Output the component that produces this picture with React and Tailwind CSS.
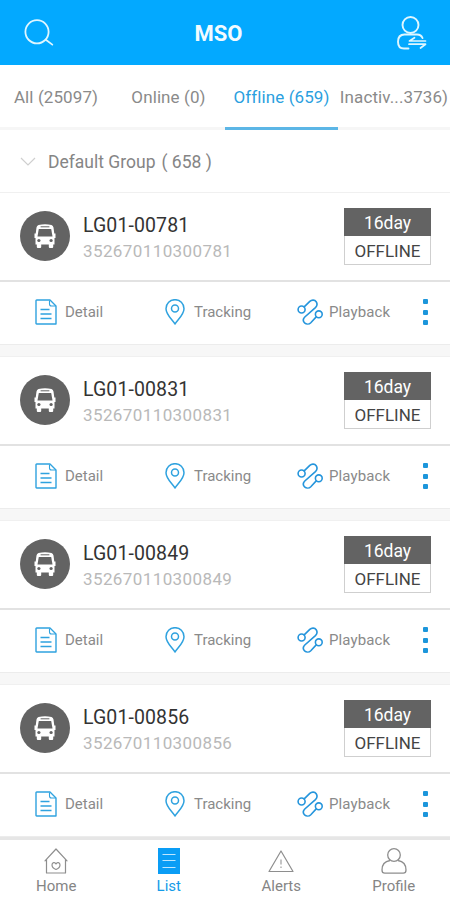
const tabs = [
  { label: 'All (25097)', box: 'w-[112px]' },
  { label: 'Online (0)', box: 'w-[113px]' },
  { label: 'Offline (659)', box: 'w-[113px]', active: true },
  { label: 'Inactiv...3736)', box: 'w-[112px]' },
];

const devices = [
  { name: 'LG01-00781', imei: '352670110300781' },
  { name: 'LG01-00831', imei: '352670110300831' },
  { name: 'LG01-00849', imei: '352670110300849' },
  { name: 'LG01-00856', imei: '352670110300856' },
];

function SearchIcon() {
  return (
    <svg className="w-[30px] h-[28px]" viewBox="0 0 30 28" fill="none" stroke="#dff6ff" strokeWidth="1.8" strokeLinecap="round">
      <circle cx="13" cy="12.800" r="11.600" />
      <path d="M21.800 20.800l6.500 4.800" />
    </svg>
  );
}

function SwitchUserIcon() {
  return (
    <svg className="w-[30px] h-[34px]" viewBox="0 0 30 34" fill="none" stroke="#dff6ff" strokeWidth="1.9" strokeLinecap="round" strokeLinejoin="round">
      <circle cx="13.500" cy="9" r="8" />
      <path d="M25.500 22C24.300 19 22 18.500 20 18.500H7.500c-4.300 0-6.500 3-6.500 7.200 0 4.100 2.200 6.800 6 6.800h4.500" />
      <path d="M28.500 25H12.500l5-3.300M12 28.200h16.500l-5 3.800" strokeWidth="1.7" />
    </svg>
  );
}

function BusIcon() {
  return (
    <svg className="w-[22px] h-[24px]" viewBox="0 0 22 24">
      <path d="M4.500 1Q11-.4 17.500 1q1.700.5 2 2.500l.8 6h1.200V14h-1v6.500h-1.300V23q0 1-1 1h-2.400q-1 0-1-1v-2.500H7.200V23q0 1-1 1H3.800q-1 0-1-1v-2.500H1.500V14h-1V9.500h1.200l.8-6q.3-2 2-2.500z" fill="#fff" />
      <path d="M7 2.800h8" stroke="#636363" strokeWidth="1" strokeLinecap="round" />
      <path d="M4.800 5h12.400l1.300 7.500h-15z" fill="#636363" />
      <circle cx="4.900" cy="16.500" r="1.600" fill="#636363" />
      <circle cx="17.100" cy="16.500" r="1.600" fill="#636363" />
    </svg>
  );
}

function DetailIcon() {
  return (
    <svg className="w-[22px] h-[26px]" viewBox="0 0 22 26" fill="none" stroke="#2fa2df" strokeWidth="1.4" strokeLinejoin="round">
      <path d="M1.700 1H15l6 6v18H1.700Q1 25 1 24.300V1.700Q1 1 1.700 1z" />
      <path d="M14.500 1.500v3.500q0 2 2 2H21" strokeWidth="1.100" />
      <path d="M5.500 10.500h9M5.500 15h11M5.500 19.500h11" />
    </svg>
  );
}

function TrackingIcon() {
  return (
    <svg className="w-[20px] h-[26px]" viewBox="0 0 20 26" fill="none" stroke="#2fa2df" strokeWidth="1.5" strokeLinejoin="round">
      <path d="M10 25C7 20.500 1 15.500 1 9.700a9 9 0 0 1 18 0C19 15.500 13 20.500 10 25z" />
      <circle cx="10" cy="9.500" r="3.500" />
    </svg>
  );
}

function PlaybackIcon() {
  return (
    <svg className="w-[26px] h-[26px]" viewBox="0 0 26 26" fill="none" stroke="#2595dc" strokeWidth="1.6" strokeLinecap="round">
      <circle cx="4.600" cy="10.500" r="3.500" />
      <circle cx="21.800" cy="15.300" r="3.400" />
      <path d="M7.200 7.900L12.800 2.400c2-1.900 5-1.600 6.400.3 1.300 1.900.8 4.200-.8 5.900L7.800 18c-1.800 1.900-1.800 4.300-.2 5.900 1.700 1.600 4.500 1.500 6.200-.2l5.400-5.800" />
    </svg>
  );
}

function HomeIcon() {
  return (
    <svg className="w-[24px] h-[26px]" viewBox="0 0 24 26" fill="none" stroke="#8e8e8e" strokeWidth="1.2" strokeLinejoin="round" strokeLinecap="round">
      <path d="M1 12.800L12 1l11 11.800M2.500 11.500V25h19V11.500" />
      <path d="M12 21.500c-2.300-1-4-2.600-4-4.600 0-2.600 3-3 4-1 1-2 4-1.600 4 1 0 2-1.700 3.600-4 4.600z" />
    </svg>
  );
}

function ListIcon() {
  return (
    <svg className="w-[22px] h-[26px]" viewBox="0 0 22 26">
      <path d="M0 0h22v26H0z" fill="#0a9df5" />
      <path d="M4.500 6.500h13M4.500 12.500h13M4.500 19.500h13" stroke="#bfe7ff" strokeWidth="1.200" />
    </svg>
  );
}

function AlertsIcon() {
  return (
    <svg className="w-[26px] h-[26px]" viewBox="0 0 26 26" fill="none" stroke="#8e8e8e" strokeWidth="1.2" strokeLinejoin="round">
      <path d="M13 3L25 23.500H1z" />
      <path d="M13 11.500v5M13 18.500v1.500" stroke="#a5a5a5" strokeWidth="1.300" />
    </svg>
  );
}

function ProfileIcon() {
  return (
    <svg className="w-[26px] h-[26px]" viewBox="0 0 26 26" fill="none" stroke="#8e8e8e" strokeWidth="1.3" strokeLinejoin="round">
      <circle cx="13" cy="7" r="6.300" />
      <path d="M9 12.500c-5 .8-8 4.500-8 9.500 0 2 .8 3.200 2.800 3.200h18.400c2 0 2.800-1.200 2.800-3.200 0-5-3-8.700-8-9.500" />
    </svg>
  );
}

function DeviceCard({ name, imei }) {
  return (
    <div className="h-[164px]">
      {/* Name, IMEI and status badge */}
      <div className="h-[90px] flex items-start pt-[18px] pl-5 pr-[19px] border-t border-t-[#f0f0f0] border-b-2 border-b-[#e2e2e2] bg-white">
        <div className="w-[50px] h-[50px] rounded-full bg-[#636363] flex items-center justify-center">
          <BusIcon />
        </div>
        <div className="ml-[13px] mt-0.5 flex-1">
          <div className="text-[19.5px] leading-[26px] tracking-[0.1px] text-[#333]">{name}</div>
          <div className="text-[17px] leading-[25px] tracking-[0.4px] text-[#b9b9b9]">{imei}</div>
        </div>
        <div className="w-[87px] -mt-[3px] text-center">
          <div className="h-[28px] bg-[#636363] text-white text-[17.5px] leading-[30px]">16day</div>
          <div className="h-[29px] border border-t-0 border-[#cfcfcf] text-[#444] text-[17px] leading-[30px]">OFFLINE</div>
        </div>
      </div>

      {/* Actions */}
      <div className="h-[62px] flex items-center pb-0.5 pl-[35px] bg-white text-[15px] text-[#8a8a8a]">
        <div className="w-[130px] flex items-center gap-2"><DetailIcon /><span className="pt-px">Detail</span></div>
        <div className="w-[132px] flex items-center gap-[9px]"><TrackingIcon /><span className="pt-px">Tracking</span></div>
        <div className="w-[126px] flex items-center gap-1.5"><PlaybackIcon /><span className="pt-px tracking-[0.1px]">Playback</span></div>
        <div className="flex flex-col gap-[5.5px]">
          <span className="w-[5px] h-[5px] rounded-[1px] bg-[#1c96db]" />
          <span className="w-[5px] h-[5px] rounded-[1px] bg-[#1c96db]" />
          <span className="w-[5px] h-[5px] rounded-[1px] bg-[#1c96db]" />
        </div>
      </div>
      <div className="h-[12px] bg-[#f7f7f7] border-t border-[#ececec]" />
    </div>
  );
}

const nav = [
  { label: 'Home', icon: HomeIcon },
  { label: 'List', icon: ListIcon, active: true },
  { label: 'Alerts', icon: AlertsIcon },
  { label: 'Profile', icon: ProfileIcon },
];

export default function App() {
  return (
    <div className="w-[450px] h-[900px] flex flex-col overflow-hidden bg-white font-['Roboto',sans-serif] whitespace-nowrap">
      {/* Header */}
      <header className="h-[65px] shrink-0 grid grid-cols-3 items-center pl-6 pr-[23px] bg-[#03a9ff]">
        <SearchIcon />
        <h1 className="text-[22px] leading-none font-bold text-[#f2fbff] pt-0.5 pr-3.5 text-center">MSO</h1>
        <span className="justify-self-end"><SwitchUserIcon /></span>
      </header>

      {/* Tabs */}
      <div className="h-[65px] shrink-0 flex text-[17px] tracking-[0.1px]">
        {tabs.map((tab) => (
          <div
            key={tab.label}
            className={`flex items-center justify-center border-b-3 pt-1 ${tab.box} ${
              tab.active ? 'border-b-[#5cb6e6] text-[#2b9fe0]' : 'border-b-[#f6f6f6] text-[#8a8a8a]'
            }`}
          >
            {tab.label}
          </div>
        ))}
      </div>

      {/* Group */}
      <div className="h-[62px] shrink-0 flex items-center pl-5 text-[17.5px] text-[#858585]">
        <svg className="w-4 h-[9px]" viewBox="0 0 16 9" fill="none" stroke="#cfcfcf" strokeWidth="1.2">
          <path d="M1 1l7 7 7-7" />
        </svg>
        <span className="ml-3 pt-0.5">Default Group</span>
        <span className="ml-1.5 pt-0.5">( 658 )</span>
      </div>

      <div className="flex-1 min-h-0 overflow-hidden">
        {devices.map((device) => (
          <DeviceCard key={device.imei} {...device} />
        ))}
      </div>

      {/* Bottom navigation */}
      <nav className="h-[63px] shrink-0 grid grid-cols-4 border-t-3 border-[#e6e6e6] bg-white">
        {nav.map(({ label, icon: Icon, active }) => (
          <div key={label} className={`flex flex-col items-center pt-2 text-[15px] leading-[25px] ${active ? 'text-[#159be8]' : 'text-[#858585]'}`}>
            <Icon />
            {label}
          </div>
        ))}
      </nav>
    </div>
  );
}
